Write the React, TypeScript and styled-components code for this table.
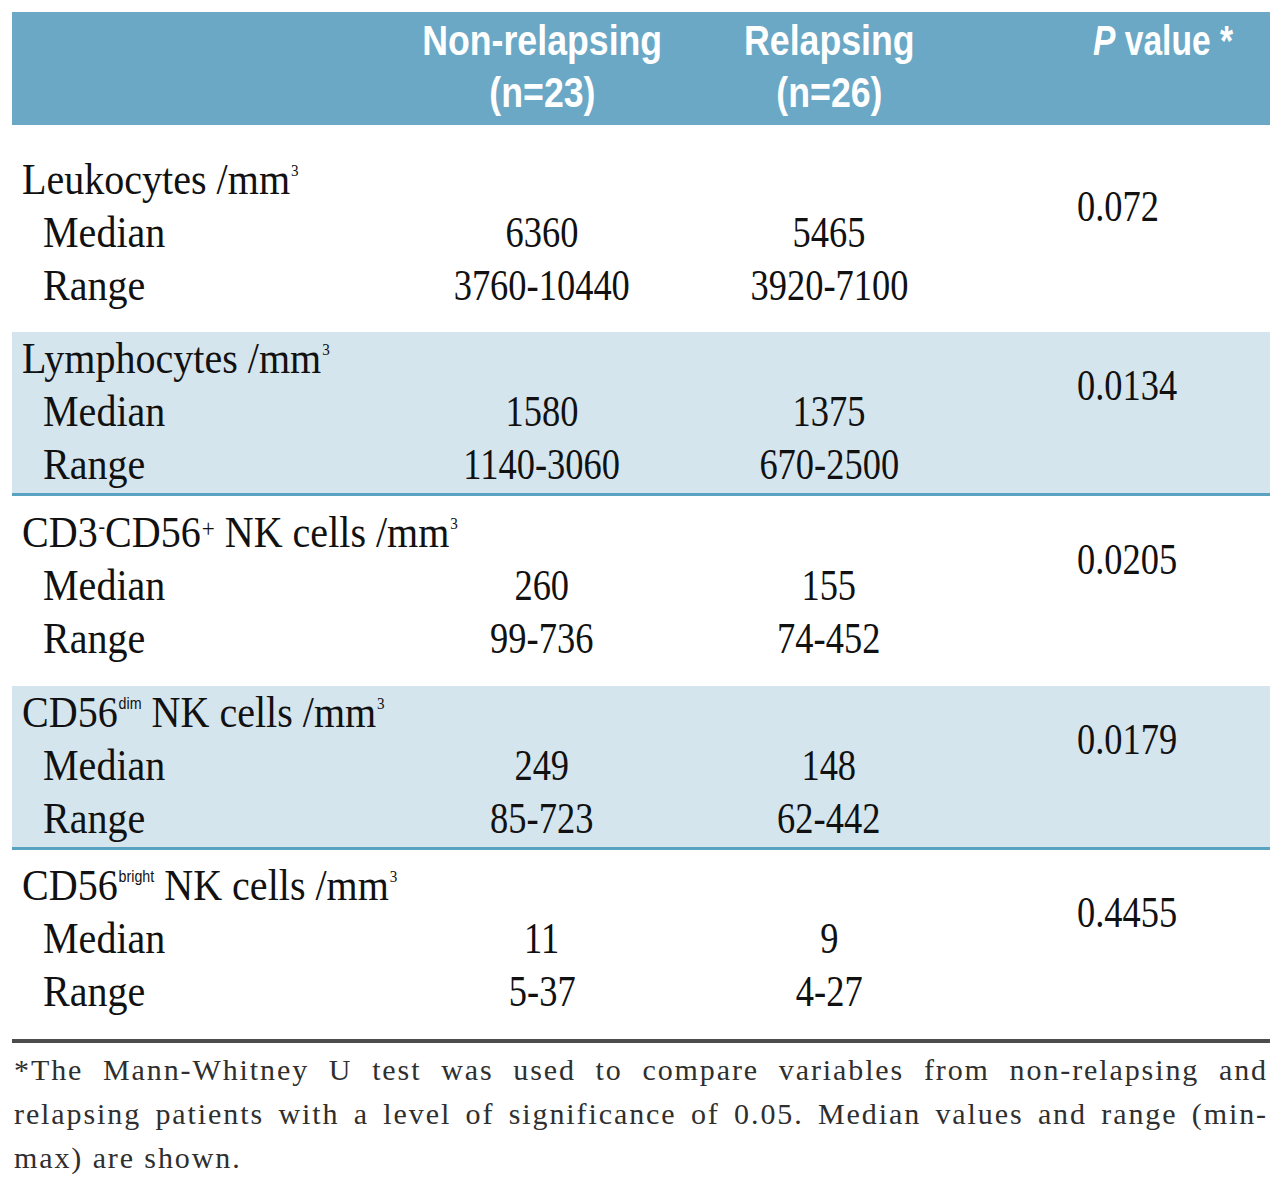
import styled, { createGlobalStyle } from 'styled-components';
import type { ReactNode } from 'react';

const GlobalStyle = createGlobalStyle`
  body {
    margin: 0;
    background: #ffffff;
  }
`;

const COLUMNS = '388px 284px 290px 1fr';

const Page = styled.div`
  width: 1258px;
  padding: 12px 10px 0 12px;
  font-family: 'Liberation Serif', 'Times New Roman', serif;
  color: #111111;
`;

const Table = styled.div`
  display: flex;
  flex-direction: column;
`;

const HeadRow = styled.div`
  display: grid;
  grid-template-columns: ${COLUMNS};
  height: 113px;
  box-sizing: border-box;
  padding-top: 3px;
  background: #6aa8c6;
  color: #ffffff;
  font-family: 'Liberation Sans', Arial, sans-serif;
  font-weight: 700;
  font-size: 42px;
  line-height: 52px;
`;

const HeadCell = styled.div<{ $align: 'center' | 'left'; $inset?: number }>`
  text-align: ${(p) => p.$align};
  padding-left: ${(p) => p.$inset ?? 0}px;
`;

interface RowProps {
  $band: boolean;
  $top: number;
  $bottom: number;
  $rule: boolean;
}

const BodyRow = styled.div<RowProps>`
  display: grid;
  grid-template-columns: ${COLUMNS};
  padding-top: ${(p) => p.$top}px;
  padding-bottom: ${(p) => p.$bottom}px;
  background: ${(p) => (p.$band ? '#d5e5ee' : '#ffffff')};
  border-bottom: ${(p) => (p.$rule ? '3px solid #5aa2c2' : 'none')};
  font-size: 45px;
  line-height: 53px;
`;

const Squeeze = styled.span<{ $x: number; $origin?: string }>`
  display: inline-block;
  white-space: nowrap;
  transform: scaleX(${(p) => p.$x});
  transform-origin: ${(p) => p.$origin ?? 'left'} center;
`;

const LabelLine = styled.div<{ $indent: number }>`
  padding-left: ${(p) => p.$indent}px;
`;

const ValueCell = styled.div`
  text-align: center;
`;

const PCell = styled.div`
  padding-left: 103px;
  padding-top: 27px;
`;

const Sup = styled.span<{ $sans?: boolean; $size: number; $lift: number }>`
  font-family: ${(p) =>
    p.$sans ? "'Liberation Sans', Arial, sans-serif" : "'Liberation Serif', serif"};
  font-size: ${(p) => p.$size}px;
  line-height: 1;
  vertical-align: ${(p) => p.$lift}px;
  margin-left: 1px;
`;

const BottomRule = styled.div`
  height: 4px;
  background: #4d4d4d;
`;

const Footnote = styled.div`
  margin-top: 5px;
  padding: 0 2px;
  font-size: 30px;
  line-height: 44px;
  letter-spacing: 1.9px;
  color: #2f2f2f;
`;

const NoteLine = styled.div<{ $justify: boolean }>`
  white-space: nowrap;
  text-align: ${(p) => (p.$justify ? 'justify' : 'left')};
  text-align-last: ${(p) => (p.$justify ? 'justify' : 'left')};
`;

const Cube = () => (
  <Sup $size={17} $lift={18}>
    3
  </Sup>
);

interface DataRow {
  title: ReactNode;
  median: [string, string];
  range: [string, string];
  p: string;
  band: boolean;
  top: number;
  bottom: number;
}

const rows: DataRow[] = [
  {
    title: (
      <>
        Leukocytes /mm
        <Cube />
      </>
    ),
    median: ['6360', '5465'],
    range: ['3760-10440', '3920-7100'],
    p: '0.072',
    band: false,
    top: 28,
    bottom: 20,
  },
  {
    title: (
      <>
        Lymphocytes /mm
        <Cube />
      </>
    ),
    median: ['1580', '1375'],
    range: ['1140-3060', '670-2500'],
    p: '0.0134',
    band: true,
    top: 0,
    bottom: 2,
  },
  {
    title: (
      <>
        CD3
        <Sup $size={22} $lift={14}>
          -
        </Sup>
        CD56
        <Sup $size={26} $lift={10}>
          +
        </Sup>{' '}
        NK cells /mm
        <Cube />
      </>
    ),
    median: ['260', '155'],
    range: ['99-736', '74-452'],
    p: '0.0205',
    band: false,
    top: 10,
    bottom: 21,
  },
  {
    title: (
      <>
        CD56
        <Sup $sans $size={16} $lift={18}>
          dim
        </Sup>{' '}
        NK cells /mm
        <Cube />
      </>
    ),
    median: ['249', '148'],
    range: ['85-723', '62-442'],
    p: '0.0179',
    band: true,
    top: 0,
    bottom: 2,
  },
  {
    title: (
      <>
        CD56
        <Sup $sans $size={16} $lift={18}>
          bright
        </Sup>{' '}
        NK cells /mm
        <Cube />
      </>
    ),
    median: ['11', '9'],
    range: ['5-37', '4-27'],
    p: '0.4455',
    band: false,
    top: 9,
    bottom: 21,
  },
];

export default function App() {
  return (
    <Page>
      <GlobalStyle />
      <Table>
        <HeadRow>
          <HeadCell $align="left" />
          <HeadCell $align="center">
            <div>
              <Squeeze $x={0.85} $origin="center">
                Non-relapsing
              </Squeeze>
            </div>
            <div>
              <Squeeze $x={0.85} $origin="center">
                (n=23)
              </Squeeze>
            </div>
          </HeadCell>
          <HeadCell $align="center">
            <div>
              <Squeeze $x={0.85} $origin="center">
                Relapsing
              </Squeeze>
            </div>
            <div>
              <Squeeze $x={0.85} $origin="center">
                (n=26)
              </Squeeze>
            </div>
          </HeadCell>
          <HeadCell $align="left" $inset={119}>
            <Squeeze $x={0.8}>
              <i>P</i> value *
            </Squeeze>
          </HeadCell>
        </HeadRow>

        {rows.map((row, i) => (
          <BodyRow
            key={i}
            $band={row.band}
            $top={row.top}
            $bottom={row.bottom}
            $rule={row.band}
          >
            <div>
              <LabelLine $indent={10}>
                <Squeeze $x={0.89}>{row.title}</Squeeze>
              </LabelLine>
              <LabelLine $indent={31}>
                <Squeeze $x={0.89}>Median</Squeeze>
              </LabelLine>
              <LabelLine $indent={31}>
                <Squeeze $x={0.89}>Range</Squeeze>
              </LabelLine>
            </div>
            {[0, 1].map((col) => (
              <ValueCell key={col}>
                <div>&nbsp;</div>
                <div>
                  <Squeeze $x={0.81} $origin="center">
                    {row.median[col]}
                  </Squeeze>
                </div>
                <div>
                  <Squeeze $x={0.81} $origin="center">
                    {row.range[col]}
                  </Squeeze>
                </div>
              </ValueCell>
            ))}
            <PCell>
              <Squeeze $x={0.81}>{row.p}</Squeeze>
            </PCell>
          </BodyRow>
        ))}
        <BottomRule />
      </Table>

      <Footnote>
        <NoteLine $justify>
          *The Mann-Whitney U test was used to compare variables from non-relapsing and
        </NoteLine>
        <NoteLine $justify>
          relapsing patients with a level of significance of 0.05. Median values and range (min-
        </NoteLine>
        <NoteLine $justify={false}>max) are shown.</NoteLine>
      </Footnote>
    </Page>
  );
}
